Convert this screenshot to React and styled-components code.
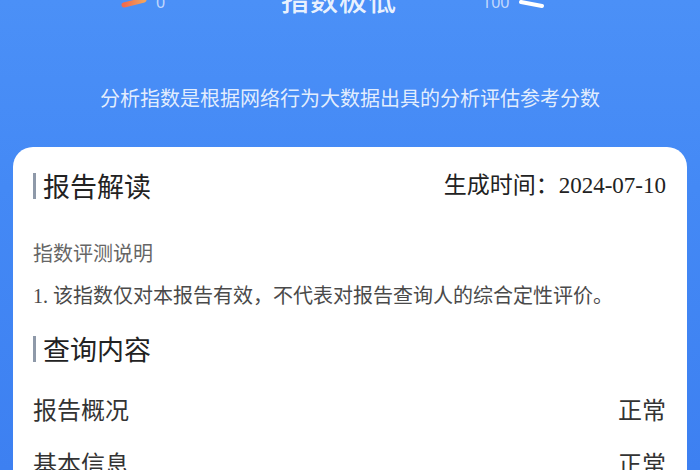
import React from "react";
import styled, { createGlobalStyle } from "styled-components";

const GlobalStyle = createGlobalStyle`
  html, body {
    margin: 0;
    padding: 0;
  }
  body {
    font-family: "Noto Sans CJK SC", "Noto Sans", sans-serif;
  }
`;

const Page = styled.div`
  width: 700px;
  height: 470px;
  overflow: hidden;
  background: linear-gradient(180deg, #4b90f7 0%, #4489f5 40%, #3d80f1 100%);
  display: flex;
  flex-direction: column;
`;

const Hero = styled.div`
  display: flex;
  flex-direction: column;
  align-items: center;
`;

const Gauge = styled.div`
  position: relative;
  width: 700px;
  height: 14px;
`;

const GaugeDrawing = styled.svg`
  position: absolute;
  left: 0;
  top: 0;
`;

const GaugeLabel = styled.span`
  position: absolute;
  left: ${({ $x }) => $x}px;
  top: -8px;
  font-family: "Noto Sans", sans-serif;
  font-size: 16px;
  line-height: 20px;
  color: rgba(226, 236, 255, 0.8);
`;

const Verdict = styled.div`
  position: absolute;
  left: 281px;
  top: -15px;
  font-size: 28px;
  line-height: 28px;
  font-weight: 500;
  color: rgba(255, 255, 255, 0.9);
  letter-spacing: 1px;
`;

const Subtitle = styled.div`
  margin-top: 70px;
  font-size: 20px;
  line-height: 28px;
  color: rgba(255, 255, 255, 0.86);
`;

const Card = styled.div`
  margin: 35px 13px 0;
  flex: 1;
  background: #ffffff;
  border-radius: 20px 20px 0 0;
  padding: 21px 21px 0 20px;
  display: flex;
  flex-direction: column;
`;

const SectionHead = styled.div`
  display: flex;
  align-items: center;
  justify-content: space-between;
  height: 36px;
  margin-top: ${({ $gap }) => $gap || 0}px;
`;

const SectionTitle = styled.div`
  display: flex;
  align-items: center;
  gap: 7px;
  font-size: 27px;
  line-height: 36px;
  color: #222222;
  &::before {
    content: "";
    width: 3px;
    height: 26px;
    background: #8e99a9;
  }
`;

const Stamp = styled.div`
  font-family: "Liberation Serif", "Noto Sans CJK SC", serif;
  font-size: 23px;
  line-height: 36px;
  color: #222222;
`;

const NoteTitle = styled.div`
  margin-top: 35px;
  font-size: 20px;
  line-height: 28px;
  color: #666666;
`;

const NoteText = styled.div`
  margin-top: 15px;
  font-family: "Liberation Serif", "Noto Sans CJK SC", serif;
  font-size: 20px;
  line-height: 28px;
  color: #4a4a4a;
`;

const ItemList = styled.div`
  margin-top: 14px;
  display: flex;
  flex-direction: column;
`;

const Item = styled.div`
  display: flex;
  align-items: center;
  justify-content: space-between;
  height: 54px;
  font-size: 24px;
  color: #333333;
`;

const items = [
  { name: "报告概况", status: "正常" },
  { name: "基本信息", status: "正常" },
];

const App = () => {
  return (
    <Page>
      <GlobalStyle />
      <Hero>
        <Gauge>
          <GaugeDrawing width="700" height="14" viewBox="0 0 700 14">
            <defs>
              <linearGradient id="low" x1="0" y1="0" x2="1" y2="0">
                <stop offset="0" stopColor="#f26b4b" />
                <stop offset="1" stopColor="#f2a35e" />
              </linearGradient>
            </defs>
            <path
              d="M124 5 L144 0"
              stroke="url(#low)"
              strokeWidth="5"
              strokeLinecap="round"
              fill="none"
            />
            <path
              d="M521 2 L542 6"
              stroke="#ffffff"
              strokeWidth="4"
              strokeLinecap="round"
              fill="none"
            />
          </GaugeDrawing>
          <GaugeLabel $x={156}>0</GaugeLabel>
          <GaugeLabel $x={482}>100</GaugeLabel>
          <Verdict>指数极低</Verdict>
        </Gauge>
        <Subtitle>分析指数是根据网络行为大数据出具的分析评估参考分数</Subtitle>
      </Hero>
      <Card>
        <SectionHead>
          <SectionTitle>报告解读</SectionTitle>
          <Stamp>生成时间：2024-07-10</Stamp>
        </SectionHead>
        <NoteTitle>指数评测说明</NoteTitle>
        <NoteText>1. 该指数仅对本报告有效，不代表对报告查询人的综合定性评价。</NoteText>
        <SectionHead $gap={21}>
          <SectionTitle>查询内容</SectionTitle>
        </SectionHead>
        <ItemList>
          {items.map((item) => (
            <Item key={item.name}>
              <span>{item.name}</span>
              <span>{item.status}</span>
            </Item>
          ))}
        </ItemList>
      </Card>
    </Page>
  );
};

export default App;
